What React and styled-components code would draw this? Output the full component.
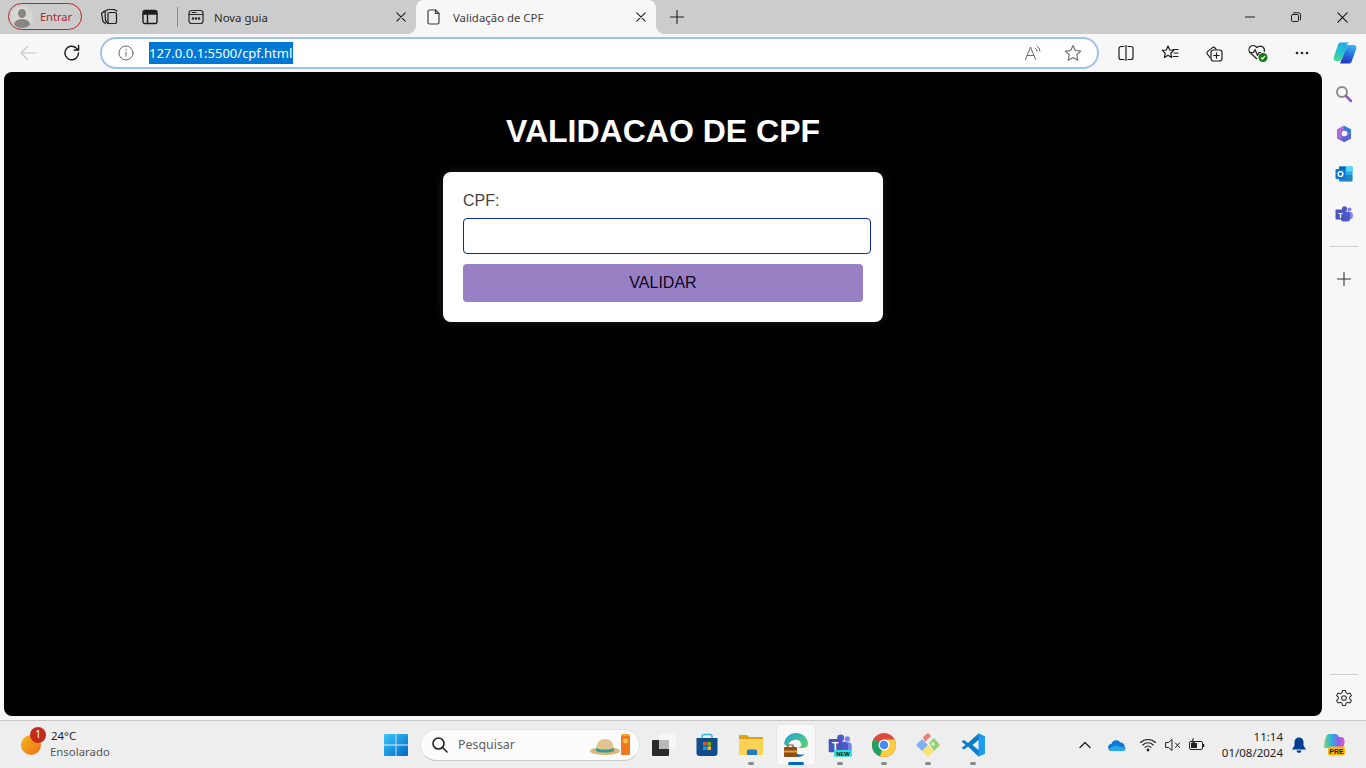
import React from 'react';
import styled, { createGlobalStyle } from 'styled-components';

const Global = createGlobalStyle`
  html, body { margin: 0; padding: 0; width: 1366px; height: 768px; overflow: hidden; background: #f7f7f7; }
  * { box-sizing: border-box; }
  #root { width: 1366px; height: 768px; }
`;
const UI = `"Noto Sans", "Open Sans", sans-serif`;
const Screen = styled.div`display: flex; flex-direction: column; width: 1366px; height: 768px; font-family: ${UI};`;

/* ---- tab strip ---- */
const TabStrip = styled.div`display: flex; align-items: stretch; height: 34px; background: #cccccc; flex: none;`;
const Profile = styled.div`
  display: flex; align-items: center; gap: 7px; width: 74px; height: 27px; margin: 3px 0 0 8px;
  border: 1px solid #b3262c; border-radius: 14px; padding-left: 2px; color: #a8262b; font-size: 11px;
`;
const Avatar = styled.span`
  position: relative; display: block; width: 22px; height: 22px; border-radius: 50%; background: #d8d6d2; overflow: hidden; flex: none;
  &::before { content: ""; position: absolute; left: 7px; top: 3px; width: 8px; height: 9px; border-radius: 50%; background: #878684; }
  &::after { content: ""; position: absolute; left: 3px; top: 13px; width: 16px; height: 11px; border-radius: 50%; background: #878684; }
`;
const Slot = styled.span`
  display: flex; align-items: center; justify-content: center; flex: none;
  width: ${p => p.$w || 44}px; margin-left: ${p => p.$ml || 0}px; margin-right: ${p => p.$mr || 0}px; color: #1c1c1c;
`;
const VSep = styled.span`width: 1px; height: 20px; background: #8c8c8c; align-self: center; margin-left: ${p => p.$ml}px; flex: none;`;
const Tab = styled.div`
  position: relative; display: flex; align-items: center; width: ${p => p.$w}px; height: 34px; flex: none; font-size: 11.4px; color: ${p => p.$active ? '#3c3c3c' : '#2a2a2a'};
  background: ${p => p.$active ? '#f7f7f7' : 'transparent'}; border-radius: ${p => p.$active ? '8px 8px 0 0' : '0'};
  padding-left: ${p => p.$pl}px;
`;
const TabFlare = styled.span`
  position: absolute; bottom: 0; width: 8px; height: 8px;
  ${p => p.$side === 'left'
    ? 'left: -8px; background: radial-gradient(circle at 0 0, transparent 7.5px, #f7f7f7 8px);'
    : 'right: -8px; background: radial-gradient(circle at 100% 0, transparent 7.5px, #f7f7f7 8px);'}
`;
const TabTitle = styled.span`flex: 1; margin-left: ${p => p.$ml}px; white-space: nowrap;`;
const WinControls = styled.div`display: flex; margin-left: auto; margin-right: 1px; align-items: center;`;

/* ---- toolbar ---- */
const Toolbar = styled.div`display: flex; align-items: center; height: 38px; background: #f7f7f7; flex: none; padding-left: 6px;`;
const AddressBar = styled.div`
  display: flex; align-items: center; width: 999px; height: 32px; margin-left: 6px; background: #fff;
  border: 2px solid #a3bfeb; border-radius: 16px; flex: none; padding-left: 16px;
`;
const Url = styled.span`
  display: block; margin-left: 15px; height: 22px; line-height: 22px; background: #0078d4; color: #fff;
  font-size: 13px; width: 144px; white-space: nowrap;
`;
const AddrRight = styled.div`display: flex; margin-left: auto; margin-right: 4px;`;

/* ---- main ---- */
const Middle = styled.div`display: flex; flex: 1; min-height: 0; background: #f7f7f7;`;
const WebView = styled.main`
  width: 1318px; height: 644px; margin-left: 4px; background: #000; border-radius: 8px; flex: none;
  display: flex; flex-direction: column; align-items: center; padding-top: 41px;
  font-family: "Liberation Sans", Arial, sans-serif;
`;
const Title = styled.h1`margin: 0 0 22px; font-size: 32px; line-height: 37px; font-weight: 700; color: #fff;`;
const Card = styled.form`
  width: 440px; height: 150px; background: #fff; border-radius: 8px; padding: 20px; box-shadow: 0 0 10px rgba(255,255,255,.12);
`;
const Label = styled.label`display: block; font-size: 16px; line-height: 18px; height: 26px; color: #444;`;
const Input = styled.div`width: 408px; height: 36px; border: 1px solid #0a2aa5; border-radius: 4px; background: #fff;`;
const Button = styled.button`
  display: block; width: 400px; height: 38px; margin-top: 10px; padding: 0; border: 0; border-radius: 4px; background: #9780c3; color: #0d0620;
  font: 16px "Liberation Sans", Arial, sans-serif;
`;
const Sidebar = styled.aside`width: 44px; height: 644px; display: flex; flex-direction: column; align-items: center; flex: none;`;
const SideIcon = styled.span`
  display: flex; height: ${p => p.$h || 40}px; width: 44px; align-items: center; justify-content: center; flex: none; color: #333;
  margin-top: ${p => p.$mt || 0}px; padding-top: ${p => p.$pt || 0}px;
`;
const SideRule = styled.span`display: block; width: 28px; height: 1px; background: #cfcfcf; flex: none; margin: ${p => p.$m};`;

/* ---- taskbar ---- */
const Taskbar = styled.footer`
  position: relative; display: flex; align-items: center; height: 48px; flex: none; background: #eeeeee; border-top: 1px solid #c6c6c6; margin-top: 4px;
`;
const Weather = styled.div`position: relative; display: flex; align-items: center; width: 130px; padding-left: 21px; flex: none;`;
const Sun = styled.span`display: block; width: 20px; height: 20px; border-radius: 50%; background: linear-gradient(135deg, #f5b81f, #ee6d17);`;
const Badge = styled.span`
  position: absolute; left: 30px; top: -3px; width: 16px; height: 16px; border-radius: 50%; background: #c42b1c; color: #fff;
  font-size: 10px; line-height: 15px; text-align: center;
`;
const WeatherText = styled.div`margin: -2px 0 0 10px; font-size: 11.4px; line-height: 16px; color: #1e1e1e; & small { display: block; font-size: 11.4px; color: #555; margin-left: -1px; }`;
const Center = styled.div`display: flex; align-items: center; margin-left: 254px; flex: none;`;
const SearchPill = styled.div`
  display: flex; align-items: center; width: 220px; height: 32px; margin-left: 12px; background: #fbfbfb; border-radius: 16px;
  border: 1px solid #e2e2e2; border-bottom-color: #c9c9c9; padding: 0 7px 0 10px; font-size: 12.4px; color: #5f5f5f; flex: none;
`;
const SearchText = styled.span`margin-left: 9px; flex: 1;`;
const AppIcon = styled.span`
  position: relative; display: flex; align-items: center; justify-content: center; width: ${p => p.$w || 44}px; height: 40px; flex: none; margin-left: ${p => p.$ml || 0}px;
  border-radius: 4px; background: ${p => p.$active ? '#f8f8f8' : 'transparent'}; box-shadow: ${p => p.$active ? '0 0 0 1px #e6e6e6' : 'none'};
  &::after {
    content: ${p => p.$dot ? '""' : 'none'}; position: absolute; bottom: 0; left: 50%; transform: translateX(-50%);
    width: ${p => p.$active ? 16 : 6}px; height: 3px; border-radius: 2px; background: ${p => p.$active ? '#0067c0' : '#8a8a8a'};
  }
`;
const Tray = styled.div`position: absolute; right: 0; top: 0; bottom: 0; display: flex; align-items: center;`;
const Clock = styled.div`width: 72px; margin-left: 2px; margin-right: 1px; text-align: right; font-size: 11.5px; line-height: 16px; color: #222; & span { display: block; }`;

/* ---- icons ---- */
const S = ({ w = 16, h, vb, children, sw = 1.2, c = 'currentColor' }) => (
  <svg width={w} height={h || w} viewBox={vb || `0 0 ${w} ${h || w}`} fill="none" stroke={c} strokeWidth={sw} strokeLinecap="round" strokeLinejoin="round">{children}</svg>
);
const Collections = () => <S w={18}><path d="M4.500 3 1.500 5.500l1.500 8 2.500 2" /><path d="M8 1.500 5 3.500l.5 9 2.500 3" /><path d="M9 1.500h5l3 1.500" /><path d="M9.500 4.500h5.500a1.500 1.500 0 0 1 1.500 1.500v8a1.500 1.500 0 0 1-1.500 1.500H9.500A1.500 1.500 0 0 1 8 14V6a1.500 1.500 0 0 1 1.500-1.500z" /></S>;
const VTabs = () => <S w={16} sw={1.4}><rect x="1" y="1.5" width="14" height="13" rx="2" /><path d="M1 5h14M5.5 5v9.5" /><path d="M1.5 2h13v3h-13z" fill="currentColor" stroke="none" /></S>;
const NewTabIc = () => <S w={16}><rect x="1" y="1.5" width="14" height="13" rx="2.5" /><path d="M1 5.5h14M4 3.5h4" /><circle cx="5" cy="9.5" r=".7" fill="currentColor" /><circle cx="8" cy="9.5" r=".7" fill="currentColor" /><circle cx="11" cy="9.5" r=".7" fill="currentColor" /></S>;
const Close = ({ w = 10 }) => <S w={w} vb="0 0 10 10" sw={1.1}><path d="M.8.8l8.4 8.4M9.2.8.8 9.2" /></S>;
const Doc = () => <S w={14} h={16}><path d="M2.5 1h6l3.5 3.5v9a1.5 1.5 0 0 1-1.5 1.5h-8A1.5 1.5 0 0 1 1 13.5v-11A1.5 1.5 0 0 1 2.5 1z" /><path d="M8.5 1v3.5H12" /></S>;
const Plus = ({ w = 14 }) => <S w={w} vb="0 0 14 14" sw={1.1}><path d="M7 .5v13M.5 7h13" /></S>;
const Minimize = () => <S w={10} h={2}><path d="M0 1h10" /></S>;
const Restore = () => <S w={10} vb="0 0 10 10" sw={1}><rect x=".5" y="2.5" width="7" height="7" rx="1.2" /><path d="M2.5 .8h5a2 2 0 0 1 2 2v5" /></S>;
const Back = () => <S w={16} c="#c6c6c6"><path d="M1 8h15M7.5 1.5 1 8l6.5 6.5" /></S>;
const Refresh = () => <S w={18} sw={1.4}><path d="M15.5 9A6.8 6.8 0 1 1 13.2 3.9L15.4 6" /><path d="M15.6 1.5V6H11.2" /></S>;
const Info = () => <S w={16} c="#666" sw={1}><circle cx="8" cy="8" r="7" /><path d="M8 7.3v4M8 4.6v.5" /></S>;
const ReadAloud = () => <S w={18} c="#6a6a6a" sw={1}><path d="M1.5 15.5 6.5 3l5 12.5M3.2 11.5h6.6" /><path d="M11 4a3.5 3.5 0 0 1 2 3M13 2a6 6 0 0 1 3 5" /></S>;
const Star = ({ c = '#6a6a6a' }) => <S w={18} c={c} sw={1.1}><path d="m9 1.5 2.3 5 5.4.6-4 3.7 1.1 5.4L9 13.5l-4.8 2.7 1.1-5.4-4-3.7 5.4-.6z" /></S>;
const Split = () => <S w={16}><path d="M6 1.5H3A2 2 0 0 0 1 3.5v9a2 2 0 0 0 2 2h3M10 1.5h3a2 2 0 0 1 2 2v9a2 2 0 0 1-2 2h-3M8 .5v15" /></S>;
const Favs = () => <S w={18}><path d="M7 2l1.7 4 4 .4-3 2.8.9 4.2L7 11.2l-3.6 2.2.9-4.2-3-2.8 4-.4z" /><path d="M12 5.5h5M13 9h4M12 12.5h5" /></S>;
const CollPlus = () => <S w={18}><path d="M5 13.5 2.2 9.8a1.6 1.6 0 0 1 .3-2.2l5-4a1.6 1.6 0 0 1 2.2.2L11 5" /><rect x="6" y="6" width="11" height="11" rx="2.5" /><path d="M11.5 8.8v5.4M8.8 11.5h5.4" /></S>;
const Health = () => <svg width="22" height="20" viewBox="0 0 22 20" fill="none" stroke="#222" strokeWidth="1.2" strokeLinejoin="round"><path d="M10 16 3 9.5A4.2 4.2 0 0 1 9.5 4l.5.6.7-.6a4.2 4.2 0 0 1 6.4 5" /><path d="M2.5 9.5h4l1.5-3 2.5 6 1.5-3h2" /><circle cx="16" cy="14.5" r="4.5" fill="#107c10" stroke="none" /><path d="m14 14.5 1.5 1.5 2.5-3" stroke="#fff" /></svg>;
const Dots = () => <svg width="14" height="4" viewBox="0 0 14 4" fill="#222"><circle cx="2" cy="2" r="1.3" /><circle cx="7" cy="2" r="1.3" /><circle cx="12" cy="2" r="1.3" /></svg>;
const Copilot = () => <svg width="24" height="24" viewBox="0 0 24 24"><defs><linearGradient id="cpa" x1="0.6" y1="0" x2="0.3" y2="1"><stop offset="0" stopColor="#1fa8ea" /><stop offset=".6" stopColor="#27c8c8" /><stop offset="1" stopColor="#4ad98a" /></linearGradient><linearGradient id="cpb" x1="0.6" y1="0" x2="0.4" y2="1"><stop offset="0" stopColor="#38b6f0" /><stop offset=".5" stopColor="#2b6fe0" /><stop offset="1" stopColor="#2036c0" /></linearGradient></defs><path d="M21 4c2 0 3 2 2.200 4L19 19.500c-.5 2-1.500 3-3 3H7L14 4z" fill="url(#cpb)" /><path d="M7 1.500h10c-1.500 0-2.500.8-3 2.500L9.500 17c-.6 2-2 3-4 3H3C1 20 .2 18 .8 16L5 4c.5-1.500 1-2.500 2-2.500z" fill="url(#cpa)" /></svg>;
const MagGlass = () => <svg width="18" height="18" viewBox="0 0 18 18" fill="none" strokeLinecap="round"><circle cx="7" cy="7" r="5" stroke="#8b8b8b" strokeWidth="2" /><path d="m11 11 5 5" stroke="#8a5cc4" strokeWidth="2.6" /></svg>;
const M365 = () => <svg width="18" height="18" viewBox="0 0 18 18"><path d="M9 .8 16 4.600v8.800L9 17.200 2 13.400V4.600z" fill="#8f6ed8" /><path d="M9 .8 16 4.600v4L9 5z" fill="#2f7fd8" /><path d="M2 4.600 9 .8v4.200L5.500 7v6.500L2 13.400z" fill="#b06ad8" /><path d="M16 8.600v4.800L9 17.200l-3.500-3.700z" fill="#5a62d8" /><circle cx="9.500" cy="8.500" r="2.800" fill="#f7f7f7" /></svg>;
const Outlook = () => <svg width="18" height="18" viewBox="0 0 18 18"><rect x="4" y="1.500" width="13.500" height="15" rx="1" fill="#28a8ea" /><path d="M4 1.500h6.800v5H4z" fill="#0364b8" /><path d="M10.800 1.500h6.700v5h-6.700z" fill="#50d9ff" /><path d="M4 10l13.500 0v5.500a1 1 0 0 1-1 1H5a1 1 0 0 1-1-1z" fill="#14447d" opacity=".35" /><rect x=".5" y="4" width="10" height="10" rx="1" fill="#0f78d4" /><circle cx="5.500" cy="9" r="2.400" fill="none" stroke="#fff" strokeWidth="1.400" /></svg>;
const Teams = ({ w = 18, badge }) => <svg width={w} height={w} viewBox="0 0 18 18"><circle cx="14.500" cy="4.500" r="2" fill="#7b83eb" /><rect x="11" y="7" width="6.800" height="7" rx="2.500" fill="#7b83eb" /><circle cx="9.500" cy="3.800" r="2.600" fill="#5059c9" /><rect x="6" y="6.500" width="9" height="10" rx="2.500" fill="#5059c9" /><rect x=".5" y="4.500" width="10" height="10" rx="1" fill="#4b53bc" /><text x="5.500" y="12.500" textAnchor="middle" fontSize="8" fontWeight="700" fill="#fff" stroke="none" fontFamily="Liberation Sans">T</text>{badge && <><rect x="4.500" y="12.800" width="13.500" height="5" rx=".6" fill="#2fe0e8" /><text x="11.250" y="17" textAnchor="middle" fontSize="4.400" fontWeight="700" fill="#111" fontFamily="Liberation Sans">NEW</text></>}</svg>;
const Gear = () => <S w={18} c="#333" sw={1.1}><path d="M7.5 1.5h3l.5 2.2 1.7 1 2.2-.7 1.5 2.6-1.7 1.5v1.8l1.7 1.5-1.5 2.6-2.2-.7-1.7 1-.5 2.2h-3l-.5-2.2-1.7-1-2.2.7-1.5-2.6 1.7-1.5V8.1L1.6 6.6 3.1 4l2.2.7 1.7-1z" /><circle cx="9" cy="9" r="2.3" /></S>;
const WinLogo = () => <svg width="24" height="24" viewBox="0 0 24 24"><defs><linearGradient id="wl" x1="0" y1="0" x2="1" y2="1"><stop offset="0" stopColor="#3cc8fa" /><stop offset="1" stopColor="#0067c8" /></linearGradient></defs><path d="M1 1h10.600v10.600H0V2a1 1 0 0 1 1-1zM12.400 1H23a1 1 0 0 1 1 1v9.600H12.400zM0 12.400h11.600V23H1a1 1 0 0 1-1-1zM12.400 12.400H24V22a1 1 0 0 1-1 1H12.400z" fill="url(#wl)" /></svg>;
const SearchGlass = () => <S w={18} c="#222" sw={1.6}><circle cx="7.500" cy="7.500" r="5.500" /><path d="m11.500 11.500 4.500 4.500" /></S>;
const HatPromo = () => <svg width="42" height="24" viewBox="0 0 42 24"><rect x="31" y="2" width="9" height="20" rx="1" fill="#f0791f" /><rect x="32" y="1" width="7" height="2" fill="#f3a23b" /><circle cx="35.500" cy="8" r="2.400" fill="#f8c84e" /><ellipse cx="15" cy="18" rx="15" ry="4" fill="#dcb67a" /><path d="M6 18c0-8 3-12 9-12s9 4 9 12z" fill="#e3c48e" /><path d="M6 15c5 2 13 2 18 0v3c-5 2-13 2-18 0z" fill="#2f9f92" /></svg>;
const TaskView = () => <svg width="24" height="22" viewBox="0 0 24 22"><rect x="7" y="0" width="17" height="15" rx="1" fill="#f6f6f6" /><rect x="0" y="6" width="17" height="16" rx="1" fill="#2a2a2a" /><rect x="7" y="6" width="10" height="9" fill="#b9b9b9" /></svg>;
const Store = () => <svg width="24" height="24" viewBox="0 0 24 24"><path d="M7 5V3.500A2 2 0 0 1 9 1.500h6a2 2 0 0 1 2 2V5" fill="none" stroke="#2fb3e8" strokeWidth="1.400" /><path d="M1.500 5h21v15a3 3 0 0 1-3 3h-15a3 3 0 0 1-3-3z" fill="#0f4d8c" /><rect x="8" y="9" width="3.600" height="3.600" fill="#f25022" /><rect x="12.400" y="9" width="3.600" height="3.600" fill="#7fba00" /><rect x="8" y="13.400" width="3.600" height="3.600" fill="#00a4ef" /><rect x="12.400" y="13.400" width="3.600" height="3.600" fill="#ffb900" /></svg>;
const Folder = () => <svg width="24" height="22" viewBox="0 0 24 22"><path d="M0 2a1 1 0 0 1 1-1h7l2 2h13a1 1 0 0 1 1 1v4H0z" fill="#dba213" /><path d="M0 5h24v15a1 1 0 0 1-1 1H1a1 1 0 0 1-1-1z" fill="#fbd254" /><path d="M8 17a1.500 1.500 0 0 1 1.500-1.500h7A1.500 1.500 0 0 1 18 17v4H8z" fill="#1f78c8" /></svg>;
const Edge = () => <svg width="24" height="26" viewBox="0 0 24 26"><defs><linearGradient id="eg" x1="0" y1="0" x2="1" y2="1"><stop offset="0" stopColor="#1fa0d8" /><stop offset="1" stopColor="#5ed66a" /></linearGradient></defs><path d="M0 12C1 5 6 1 12 1c7 0 12 5 12 11 0 3-3 4-6 4h-4c3-1 4-3 3-5-1-3-4-4-7-3-4 1-6 4-6 7z" fill="url(#eg)" /><path d="M4 20c1 3 5 5 9 5 3 0 6-1 8-3-3 1-7 1-9-1-2-2-3-4-2-7-3 1-5 3-6 6z" fill="#0c5fb0" /><rect x="0" y="15" width="13" height="10" rx="1" fill="#8a4f16" /><rect x="0" y="18.500" width="13" height="2" fill="#e5a03a" /><rect x="4" y="13" width="5" height="2.500" fill="none" stroke="#8a4f16" /></svg>;
const Chrome = () => <svg width="24" height="24" viewBox="0 0 24 24"><circle cx="12" cy="12" r="12" fill="#dd4b3e" /><path d="M12 12 1.600 6a12 12 0 0 0 6.400 17.300L12 12z" fill="#1ea362" /><path d="M12 12h12a12 12 0 0 1-16 11.300z" fill="#ffcd40" /><path d="M12 6.500h10.400A12 12 0 0 1 24 12H12z" fill="#ffcd40" /><circle cx="12" cy="12" r="5.500" fill="#fff" /><circle cx="12" cy="12" r="4.300" fill="#4a89f3" /></svg>;
const Kraken = () => <svg width="24" height="26" viewBox="0 0 24 26"><path d="m0 13 6-6 6 6-6 6z" fill="#7fb0f5" /><path d="m7 5 5-4 3 3-6 6z" fill="#ef7b78" /><path d="m13 11 5-5 6 7-6 6z" fill="#8fd36a" /><path d="m6 19 6-6 6 6-6 6z" fill="#f7e27a" /><circle cx="17" cy="12" r="1.800" fill="#eee" /></svg>;
const VSCode = () => <svg width="24" height="24" viewBox="0 0 24 24"><path d="M17.500.5 24 3.500v17L17.500 23.500 7 13.500l-4 3-2.500-1.500L4.500 12 .5 8.500 3 7l4 3z" fill="#0a7cc8" /><path d="M17.500.5 24 3.500v17l-6.500 3V17l-6-5 6-5z" fill="#1f9cf0" /><path d="M17.500 7v10l-6-5z" fill="#eee" /></svg>;
const Chevron = () => <S w={12} h={8} vb="0 0 12 8" c="#222" sw={1.3}><path d="m1 6.500 5-5 5 5" /></S>;
const OneDrive = () => <svg width="18" height="12" viewBox="0 0 18 12"><path d="M4 12a3.500 3.500 0 0 1-.6-7A5 5 0 0 1 12.500 3.500a3.900 3.900 0 0 1 4 4.500L17.500 9c0 2-1 3-3 3z" fill="#0f78d4" /><path d="M4 12a3 3 0 0 1-3-2.500l6-3 10.500 2.500c0 2-1 3-3 3z" fill="#28a8ea" /></svg>;
const Wifi = () => <S w={16} h={14} vb="0 0 16 14" c="#222" sw={1.100}><path d="M.6 4.500a10.500 10.500 0 0 1 14.800 0M2.800 7a7.300 7.300 0 0 1 10.400 0M5 9.400a4 4 0 0 1 6 0" /><circle cx="8" cy="12" r=".9" fill="#222" /></S>;
const Mute = () => <S w={16} h={14} vb="0 0 16 14" c="#222" sw={1}><path d="M1 4.500h2.500L7 1.500v11l-3.500-3H1z" /><path d="m10.500 5 4 4.500M14.500 5l-4 4.500" /></S>;
const Battery = () => <svg width="16" height="14" viewBox="0 0 16 14" fill="none" stroke="#222"><rect x=".5" y="3.500" width="13" height="8" rx="1.500" /><rect x="2" y="5" width="6" height="5" fill="#222" stroke="none" /><path d="M14.500 6v3" strokeWidth="1.500" /><path d="M4.500 0 2.500 4h3l-2 4" stroke="#222" fill="#222" strokeWidth=".8" /></svg>;
const Bell = () => <svg width="14" height="16" viewBox="0 0 14 16" fill="#003e92"><path d="M7 .5a4.500 4.500 0 0 1 4.500 4.500v3.500L14 12.500H0l2.500-4V5A4.500 4.500 0 0 1 7 .5z" /><path d="M4.500 13.500h5a2.500 2.500 0 0 1-5 0z" /></svg>;
const CopilotPre = () => <svg width="24" height="24" viewBox="0 0 24 24"><defs><linearGradient id="cpp" x1="0" y1="0" x2="1" y2="0"><stop offset="0" stopColor="#7cd66a" /><stop offset=".35" stopColor="#2bb4e8" /><stop offset=".7" stopColor="#8a62e8" /><stop offset="1" stopColor="#e45ac8" /></linearGradient></defs><path d="M7 1h6c2 0 3 1 4 3h2c3 0 4 3 3.500 6L21 15H2L2.500 10C3 5 4.500 1 7 1z" fill="url(#cpp)" /><rect x="6" y="13.500" width="17" height="9" rx="2" fill="#ffb900" /><text x="14.500" y="21" textAnchor="middle" fontSize="7" fontWeight="700" fill="#222" fontFamily="Liberation Sans">PRE</text></svg>;

export default function App() {
  return (
    <Screen>
      <Global />
      <TabStrip>
        <Profile><Avatar />Entrar</Profile>
        <Slot $w={18} $ml={18}><Collections /></Slot>
        <Slot $w={16} $ml={24}><VTabs /></Slot>
        <VSep $ml={19} />
        <Tab $w={238} $pl={10}>
          <NewTabIc /><TabTitle $ml={10}>Nova guia</TabTitle><Slot $w={30}><Close /></Slot>
        </Tab>
        <Tab $w={240} $active $pl={11}>
          <TabFlare $side="left" />
          <Doc /><TabTitle $ml={12}>Validação de CPF</TabTitle><Slot $w={30}><Close /></Slot>
          <TabFlare $side="right" />
        </Tab>
        <Slot $w={14} $ml={14}><Plus /></Slot>
        <WinControls>
          <Slot $w={46}><Minimize /></Slot>
          <Slot $w={46}><Restore /></Slot>
          <Slot $w={46}><Close w={11} /></Slot>
        </WinControls>
      </TabStrip>
      <Toolbar>
        <Slot $w={44}><Back /></Slot>
        <Slot $w={44}><Refresh /></Slot>
        <AddressBar>
          <Info />
          <Url>127.0.0.1:5500/cpf.html</Url>
          <AddrRight>
            <Slot $w={40}><ReadAloud /></Slot>
            <Slot $w={40}><Star /></Slot>
          </AddrRight>
        </AddressBar>
        <Slot $w={44} $ml={5}><Split /></Slot>
        <Slot $w={44}><Favs /></Slot>
        <Slot $w={44}><CollPlus /></Slot>
        <Slot $w={44}><Health /></Slot>
        <Slot $w={44}><Dots /></Slot>
        <Slot $w={42}><Copilot /></Slot>
      </Toolbar>
      <Middle>
        <WebView>
          <Title>VALIDACAO DE CPF</Title>
          <Card onSubmit={e => e.preventDefault()}>
            <Label>CPF:</Label>
            <Input />
            <Button type="button">VALIDAR</Button>
          </Card>
        </WebView>
        <Sidebar>
          <SideIcon $mt={2}><MagGlass /></SideIcon>
          <SideIcon><M365 /></SideIcon>
          <SideIcon><Outlook /></SideIcon>
          <SideIcon><Teams /></SideIcon>
          <SideRule $m="12px 0 12px" />
          <SideIcon><Plus /></SideIcon>
          <SideRule $m="auto 0 0" />
          <SideIcon $h={41} $pt={4}><Gear /></SideIcon>
        </Sidebar>
      </Middle>
      <Taskbar>
        <Weather>
          <Sun /><Badge>1</Badge>
          <WeatherText>24°C<small>Ensolarado</small></WeatherText>
        </Weather>
        <Center>
          <Slot $w={24}><WinLogo /></Slot>
          <SearchPill>
            <SearchGlass /><SearchText>Pesquisar</SearchText><HatPromo />
          </SearchPill>
          <AppIcon $w={36} $ml={6}><TaskView /></AppIcon>
          <AppIcon $w={44} $ml={3}><Store /></AppIcon>
          <AppIcon $w={44} $dot><Folder /></AppIcon>
          <AppIcon $w={38} $ml={4} $active $dot><Edge /></AppIcon>
          <AppIcon $w={44} $ml={3} $dot><Teams w={24} badge /></AppIcon>
          <AppIcon $w={44} $dot><Chrome /></AppIcon>
          <AppIcon $w={44} $dot><Kraken /></AppIcon>
          <AppIcon $w={44} $ml={1} $dot><VSCode /></AppIcon>
        </Center>
        <Tray>
          <Slot $w={32}><Chevron /></Slot>
          <Slot $w={32}><OneDrive /></Slot>
          <Slot $w={24} $ml={3}><Wifi /></Slot>
          <Slot $w={24} $ml={1}><Mute /></Slot>
          <Slot $w={24}><Battery /></Slot>
          <Clock><span>11:14</span><span>01/08/2024</span></Clock>
          <Slot $w={30}><Bell /></Slot>
          <Slot $w={40} $mr={12}><CopilotPre /></Slot>
        </Tray>
      </Taskbar>
    </Screen>
  );
}
